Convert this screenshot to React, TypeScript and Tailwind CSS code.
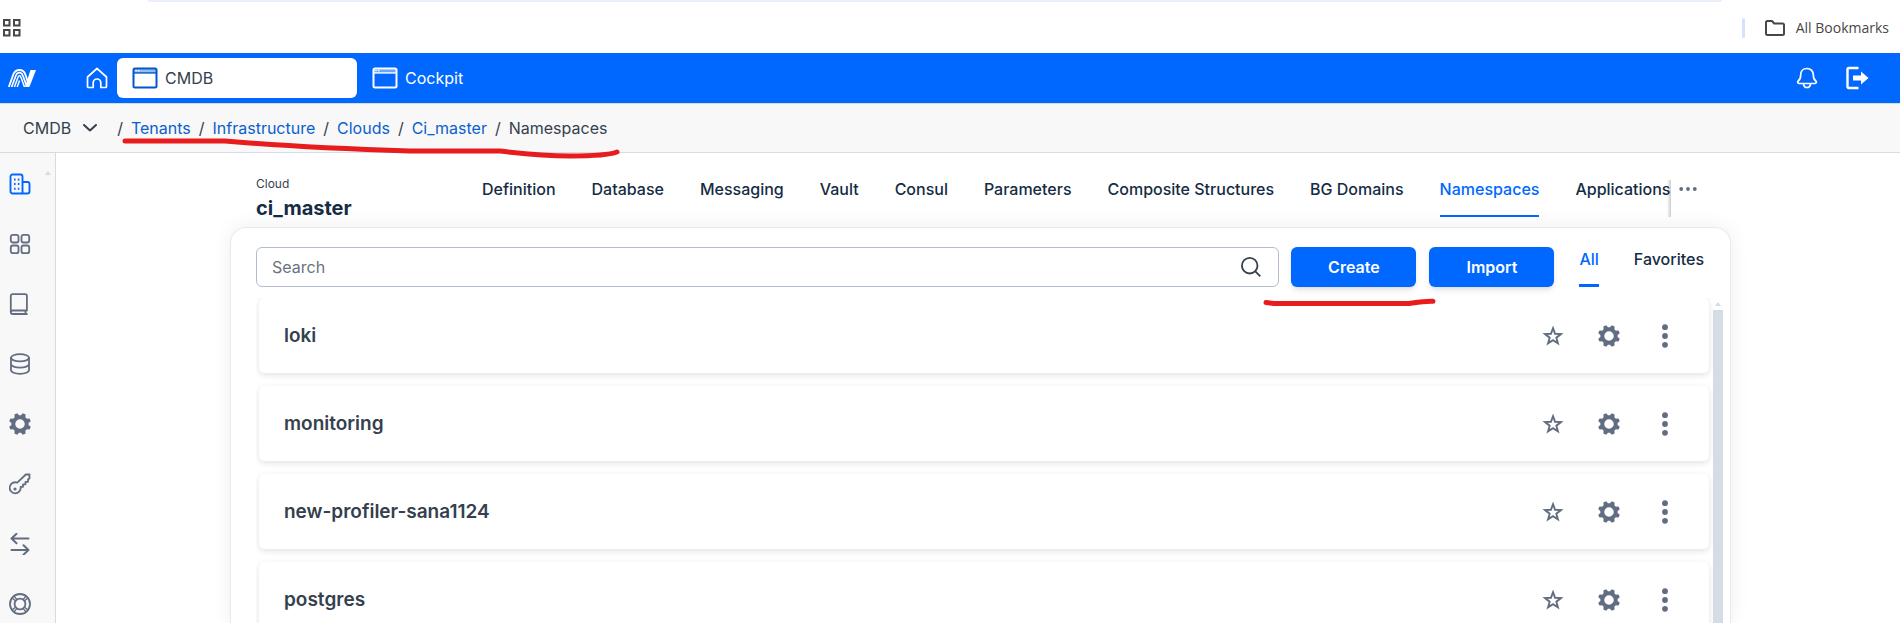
import React from "react";
import type { ReactNode } from "react";

const breadcrumbs = ["Tenants", "Infrastructure", "Clouds", "Ci_master"];

const tabs = [
  "Definition",
  "Database",
  "Messaging",
  "Vault",
  "Consul",
  "Parameters",
  "Composite Structures",
  "BG Domains",
  "Namespaces",
  "Applications",
];

const namespaces = ["loki", "monitoring", "new-profiler-sana1124", "postgres"];

function AppsIcon() {
  return (
    <svg width="20" height="20" viewBox="0 0 20 20" fill="none" stroke="#474747" strokeWidth="2">
      <path d="M2 2h5.500v5.500H2zM12 2h5.500v5.500H12zM2 12h5.500v5.500H2zM12 12h5.500v5.500H12z" />
    </svg>
  );
}

function FolderIcon() {
  return (
    <svg width="22" height="18" viewBox="0 0 22 18" fill="none" stroke="#474747" strokeWidth="2" strokeLinejoin="round">
      <path d="M2 3.500A1.500 1.500 0 0 1 3.500 2H8l2.200 2.500h8.300A1.500 1.500 0 0 1 20 6v8.500a1.500 1.500 0 0 1-1.500 1.500h-15A1.500 1.500 0 0 1 2 14.500z" />
    </svg>
  );
}

function Logo() {
  return (
    <svg width="28" height="18" viewBox="0 0 28 18" fill="none" stroke="#fff">
      <path d="M.8 18 5.500 5C7.500-.3 15.200-.5 17.200 5l4 12" strokeWidth="1.900" />
      <path d="M3.600 18 8 6.300C9.500 2.600 13.500 2.600 14.800 6.500L19 18" strokeWidth="1.700" />
      <path d="M6.400 18 9.900 8.500C10.600 6.300 12.200 6.300 13 8.500L16.500 18" strokeWidth="1.500" />
      <path d="M9.200 18l2.300-6.500" strokeWidth="1.500" />
      <path d="M17 18 22.500 1H28l-6 15.500c-.5 1.200-1 1.500-2 1.500z" fill="#fff" stroke="none" />
    </svg>
  );
}

function HomeIcon() {
  return (
    <svg width="22" height="22" viewBox="0 0 22 22" fill="none" stroke="#fff" strokeWidth="1.700" strokeLinejoin="round" strokeLinecap="round">
      <path d="M11 1.500 20.500 10v9.500a1 1 0 0 1-1 1h-4.700v-4.700a3.800 3.800 0 0 0-7.600 0v4.700H2.500a1 1 0 0 1-1-1V10z" />
    </svg>
  );
}

function WindowIcon() {
  return (
    <svg width="26" height="22" viewBox="0 0 26 22" fill="none" stroke="currentColor" strokeWidth="2">
      <path d="M1.500 3.600h23" strokeWidth="3" opacity=".4" />
      <rect x="1.500" y="1.500" width="23" height="19" rx="1.500" />
      <path d="M1.500 5.900h23" strokeWidth="1.500" />
      <path d="M3.300 3.700h1.500M6 3.700h1.500" stroke="#fff" strokeWidth="1.300" />
    </svg>
  );
}

function BellIcon() {
  return (
    <svg width="22" height="22" viewBox="0 0 22 22" fill="none" stroke="#fff" strokeWidth="1.700" strokeLinejoin="round" strokeLinecap="round">
      <path d="M11 1.500c-4 0-6.300 2.800-6.300 6.200 0 3.800-.7 5-2.500 6.300-1.100.9-.5 2.500.8 2.500h16c1.300 0 1.900-1.600.8-2.500-1.800-1.300-2.500-2.500-2.500-6.300 0-3.400-2.300-6.200-6.300-6.200z" />
      <path d="M7.500 16.800c.6 4.900 6.400 4.900 7 0" />
    </svg>
  );
}

function LogoutIcon() {
  return (
    <svg width="24" height="24" viewBox="0 0 24 24" fill="none" stroke="#fff" strokeWidth="2.400">
      <path d="M13.500 2H4a1.500 1.500 0 0 0-1.500 1.500v17A1.500 1.500 0 0 0 4 22h9.500" />
      <path d="M8 9.500h8V5.500l7.500 6.500-7.500 6.500v-4H8z" fill="#fff" stroke="none" />
    </svg>
  );
}

const TEETH = [22.5, 67.5, 112.5, 157.5, 202.5, 247.5, 292.5, 337.5];

function GearIcon() {
  return (
    <svg width="22" height="22" viewBox="0 0 22 22" fill="none">
      <circle cx="11" cy="11" r="6.700" stroke="#626d82" strokeWidth="3.900" />
      {TEETH.map((angle) => (
        <path key={angle} d="M8.300 3.500 9.500 0h3l1.200 3.500z" fill="#626d82" transform={`rotate(${angle} 11 11)`} />
      ))}
    </svg>
  );
}

function StarIcon() {
  return (
    <svg width="22" height="22" viewBox="0 0 22 22" fill="none" stroke="#626d82" strokeWidth="1.900" strokeMiterlimit="10">
      <path d="M11 3.200 13.060 8.770 19 9 14.330 12.680 15.940 18.400 11 15.100 6.060 18.400 7.670 12.680 3 9 8.940 8.770z" />
    </svg>
  );
}

function MoreVertical() {
  return (
    <svg width="8" height="24" viewBox="0 0 8 24" fill="#626d82">
      <circle cx="4" cy="3.200" r="2.900" />
      <circle cx="4" cy="12" r="2.900" />
      <circle cx="4" cy="20.800" r="2.900" />
    </svg>
  );
}

function SideIcon({ children }: { children: ReactNode }) {
  return (
    <svg width="22" height="22" viewBox="0 0 22 22" fill="none" stroke="currentColor" strokeWidth="1.800" strokeLinejoin="round" strokeLinecap="round">
      {children}
    </svg>
  );
}

const sideItems: { label: string; icon: ReactNode }[] = [
  {
    label: "Tenants",
    icon: (
      <SideIcon>
        <path d="M1.500 18.500v-15a2 2 0 0 1 2-2h8a2 2 0 0 1 2 2v17h-10a2 2 0 0 1-2-2zM13.500 9h5a2 2 0 0 1 2 2v7.500a2 2 0 0 1-2 2h-5" strokeWidth="1.900" />
        <path d="M5 6.500h1.600M8.800 6.500h1.600M5 11h1.600M8.800 11h1.600M5 15.800h1.600M8.800 15.800h1.600" strokeWidth="2" strokeLinecap="butt" />
      </SideIcon>
    ),
  },
  {
    label: "Dashboard",
    icon: (
      <SideIcon>
        <rect x="1.800" y="1.800" width="7.700" height="7.700" rx="2" />
        <rect x="12.500" y="1.800" width="7.700" height="7.700" rx="2" />
        <rect x="1.800" y="12.500" width="7.700" height="7.700" rx="2" />
        <rect x="12.500" y="12.500" width="7.700" height="7.700" rx="2" />
      </SideIcon>
    ),
  },
  {
    label: "Catalog",
    icon: (
      <SideIcon>
        <path d="M1.800 18.700V3a1.800 1.800 0 0 1 1.800-1.800h12.500A1.800 1.800 0 0 1 17.900 3v14.500M17.900 17.500H3.600a1.600 1.600 0 0 0 0 3.500h14.300M16.500 17.500v3.300" />
      </SideIcon>
    ),
  },
  {
    label: "Databases",
    icon: (
      <SideIcon>
        <ellipse cx="11" cy="4.800" rx="9" ry="3.600" />
        <path d="M2 4.800v12.400c0 2 4 3.600 9 3.600s9-1.600 9-3.600V4.800M2 11c0 2 4 3.600 9 3.600s9-1.600 9-3.600" />
      </SideIcon>
    ),
  },
  { label: "Settings", icon: <GearIcon /> },
  {
    label: "Keys",
    icon: (
      <SideIcon>
        <path d="M8.300 9.700 16.800 1.500h3.700v3.700l-1.500 1.300v2.300h-2.500v2.500H14v2.500h-2.400a5.500 5.500 0 1 1-3.300-4.100z" />
        <circle cx="6" cy="16" r=".7" fill="currentColor" />
      </SideIcon>
    ),
  },
  {
    label: "Transfers",
    icon: (
      <SideIcon>
        <path d="M19.500 5.500H2.500M7.500.8 2.500 5.500l5 4.700M2.500 17h17M14.500 12.300l5 4.700-5 4.700" strokeWidth="2" />
      </SideIcon>
    ),
  },
  {
    label: "Support",
    icon: (
      <SideIcon>
        <circle cx="11" cy="11" r="10" />
        <circle cx="11" cy="11" r="5.400" />
        <path d="M3.200 5 6.600 8M5 3.200 8 6.600M18.800 5 15.400 8M17 3.200 14 6.600M3.200 17 6.600 14M5 18.800 8 15.400M18.800 17 15.400 14M17 18.800 14 15.400" strokeWidth="1.300" />
      </SideIcon>
    ),
  },
];

export default function App() {
  return (
    <div className="relative flex h-screen flex-col overflow-hidden bg-white font-['Inter',sans-serif] text-base text-[#353f4e]">
      <div className="flex h-[53px] shrink-0 flex-col">
        <div className="mr-[178px] ml-[148px] h-[2px] rounded-b-full bg-[#e9eefb]" />
        <div className="flex flex-1 items-center justify-between pr-[11px] pl-[2px]">
          <button type="button" aria-label="Apps"><AppsIcon /></button>
          <div className="flex items-center">
            <div className="h-5 w-[3px] rounded-full bg-[#d3e3fd]" />
            <button type="button" className="ml-[19px] flex items-center gap-[10px] font-['Open_Sans',sans-serif] text-sm text-[#474747]">
              <FolderIcon />
              All Bookmarks
            </button>
          </div>
        </div>
      </div>

      <header className="flex h-[50px] shrink-0 items-center bg-[#0068ff] pr-[31px] pl-2 text-white">
        <Logo />
        <button type="button" aria-label="Home" className="ml-[50px]"><HomeIcon /></button>
        <nav className="ml-[9px] flex items-center">
          <a href="#cmdb" className="flex h-10 w-60 items-center gap-[7px] rounded-md bg-white px-[15px]">
            <span className="text-[#0058cc]"><WindowIcon /></span>
            <span className="text-[#353f4e]">CMDB</span>
          </a>
          <a href="#cockpit" className="flex h-10 items-center gap-[7px] px-[15px]">
            <WindowIcon />
            Cockpit
          </a>
        </nav>
        <div className="ml-auto flex items-center gap-[27px]">
          <button type="button" aria-label="Notifications"><BellIcon /></button>
          <button type="button" aria-label="Log out"><LogoutIcon /></button>
        </div>
      </header>

      <div className="flex h-[50px] shrink-0 items-center border-y border-[#d5dce3] bg-[#f8f8f8] pl-[23px]">
        <button type="button" className="flex items-center gap-3">
          CMDB
          <svg width="14" height="8" viewBox="0 0 14 8" fill="none" stroke="#353f4e" strokeWidth="2" strokeLinecap="round" strokeLinejoin="round">
            <path d="m1 1 6 5.500L13 1" />
          </svg>
        </button>
        <nav aria-label="Breadcrumb" className="ml-5 flex items-center gap-2">
          {breadcrumbs.map((crumb) => (
            <React.Fragment key={crumb}>
              <span>/</span>
              <a href={`#${crumb}`} className="text-[#0b5fce]">{crumb}</a>
            </React.Fragment>
          ))}
          <span>/</span>
          <span>Namespaces</span>
        </nav>
      </div>

      <div className="flex min-h-0 flex-1">
        <aside className="flex w-14 shrink-0 border-r border-[#d5dce3] bg-[#f8f8f8]">
          <nav className="flex flex-col gap-[38px] pt-5 pl-[9px] text-[#626d82]">
            {sideItems.map((item, index) => (
              <a key={item.label} href={`#${item.label}`} aria-label={item.label} className={index === 0 ? "text-[#0068ff]" : ""}>
                {item.icon}
              </a>
            ))}
          </nav>
          <svg className="mt-[18px] ml-[14px]" width="6" height="4" viewBox="0 0 6 4" fill="#d5dce3"><path d="M0 4 3 0l3 4z" /></svg>
        </aside>

        <main className="flex min-w-0 flex-1 flex-col pr-[169px] pl-[174px]">
          <div className="flex h-[74px] shrink-0 items-start pl-[26px]">
            <div className="w-[226px] shrink-0 pt-[23px]">
              <p className="text-xs leading-4">Cloud</p>
              <h1 className="mt-1 text-xl leading-6 font-bold text-[#152c44]">ci_master</h1>
            </div>
            <nav className="flex h-[64px] min-w-0 gap-9 pt-[24px] font-medium whitespace-nowrap text-[#152c44]">
              {tabs.map((tab) => (
                <a
                  key={tab}
                  href={`#${tab}`}
                  className={tab === "Namespaces" ? "border-b-2 border-[#0068ff] text-[#0068ff]" : ""}
                >
                  {tab}
                </a>
              ))}
            </nav>
            <div className="mt-[27px] -ml-[3px] h-[37px] w-1 shrink-0 bg-linear-to-l from-black/20 to-transparent" />
            <button type="button" aria-label="More tabs" className="mt-[34px] ml-2">
              <svg width="18" height="4" viewBox="0 0 18 4" fill="#626d82">
                <circle cx="2.200" cy="2" r="1.900" />
                <circle cx="9" cy="2" r="1.900" />
                <circle cx="15.800" cy="2" r="1.900" />
              </svg>
            </button>
          </div>

          <section className="flex min-h-0 flex-1 flex-col rounded-t-2xl border border-b-0 border-[#e9e9ea] bg-white pt-[19px] pr-[7px] pl-[25px] shadow-[0_0_20px_rgba(0,0,0,0.07)]">
            <div className="flex h-10 shrink-0 items-center pr-[19px]">
              <label className="flex h-10 min-w-0 flex-1 items-center rounded-md border border-[#b1bccd] pr-4 pl-[15px]">
                <input type="search" placeholder="Search" aria-label="Search" className="min-w-0 flex-1 bg-transparent outline-none placeholder:text-[#69727f]" />
                <svg width="22" height="22" viewBox="0 0 22 22" fill="none" stroke="#353f4e" strokeWidth="1.800">
                  <circle cx="9.700" cy="9.700" r="7.800" />
                  <path d="m15.300 15.300 5 5" />
                </svg>
              </label>
              <button type="button" className="ml-3 h-10 w-[125px] rounded-md bg-[#0068ff] font-semibold text-white shadow-md">Create</button>
              <button type="button" className="ml-[13px] h-10 w-[125px] rounded-md bg-[#0068ff] font-semibold text-white shadow-md">Import</button>
              <div className="ml-[25px] flex h-10 gap-[35px] font-medium text-[#152c44]">
                <button type="button" className="flex items-start border-b-3 border-[#0068ff] text-[#0068ff]">All</button>
                <button type="button" className="flex items-start">Favorites</button>
              </div>
            </div>

            <div className="mt-[11px] flex min-h-0 flex-1">
              <ul className="flex min-w-0 flex-1 flex-col gap-[13px] overflow-hidden pr-1 pl-[3px]">
                {namespaces.map((name) => (
                  <li key={name} className="flex h-[75px] shrink-0 items-center rounded-md bg-white pr-[40px] pl-[25px] shadow-[0_2px_7px_rgba(0,0,0,0.12)]">
                    <a href={`#${name}`} className="mr-auto text-[19px] leading-7 font-semibold">{name}</a>
                    <button type="button" aria-label={`Add ${name} to favorites`}><StarIcon /></button>
                    <button type="button" aria-label={`Settings of ${name}`} className="ml-[34px]"><GearIcon /></button>
                    <button type="button" aria-label={`More actions for ${name}`} className="ml-[41px]"><MoreVertical /></button>
                  </li>
                ))}
              </ul>
              <div className="flex w-[10px] flex-col items-center">
                <svg className="my-1 shrink-0" width="6" height="4" viewBox="0 0 6 4" fill="#d5dce3"><path d="M0 4 3 0l3 4z" /></svg>
                <div className="w-full flex-1 bg-[#d5dce5]" />
              </div>
            </div>
          </section>
        </main>
      </div>

      <svg className="pointer-events-none absolute top-[134px] left-[120px]" width="504" height="28" viewBox="0 0 504 28" fill="none" stroke="#e81c1c" strokeWidth="5" strokeLinecap="round" strokeLinejoin="round">
        <path d="M5 7h100C150 11 190 14 290 17h90c25 3 50 5 70 5 25 0 42-2 47-4" />
      </svg>
      <svg className="pointer-events-none absolute top-[296px] left-[1262px]" width="176" height="12" viewBox="0 0 176 12" fill="none" stroke="#e81c1c" strokeWidth="5" strokeLinecap="round" strokeLinejoin="round">
        <path d="M4 6.500 12 7.500h135c10-1.500 15-2.500 24-2.200" />
      </svg>
    </div>
  );
}
